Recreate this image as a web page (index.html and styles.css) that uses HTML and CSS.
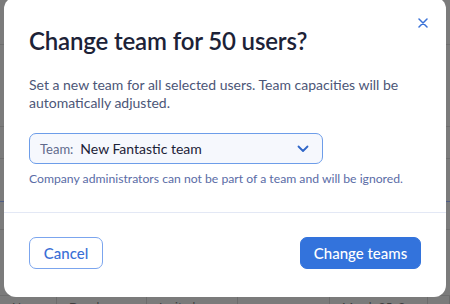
FILE: index.html
```html
<!DOCTYPE html>
<html lang="en">
<head>
<meta charset="utf-8">
<title>Change team</title>
<link rel="stylesheet" href="styles.css">
</head>
<body>
<div class="page">
  <div class="bg">
    <div class="bg-row h1"></div>
    <div class="bg-row h2"></div>
    <div class="bg-row h3"></div>
    <div class="bg-row h4 link-row"></div>
    <div class="bg-row h5"></div>
    <div class="bg-row h6"></div>
    <div class="bg-row h7 cols">
      <span>Name</span><span>Develop</span><span>Invited</span><span></span><span>March 25, 2</span><span></span>
    </div>
  </div>

  <div class="modal" role="dialog" aria-labelledby="dlg-title">
    <button class="close" aria-label="Close">
      <svg viewBox="0 0 10 10" width="10" height="10"><path d="M1 1L9 9M9 1L1 9" stroke="currentColor" stroke-width="1.5" stroke-linecap="round"/></svg>
    </button>
    <div class="body">
      <h1 id="dlg-title" class="title">Change team for 50 users?</h1>
      <p class="desc">Set a new team for all selected users. Team capacities will be automatically adjusted.</p>
      <div class="select">
        <span class="label">Team:</span>
        <span class="value">New Fantastic team</span>
        <svg class="chev" viewBox="0 0 12 8" width="12" height="8"><path d="M1.5 1.5L6 6L10.5 1.5" fill="none" stroke="currentColor" stroke-width="1.8" stroke-linecap="round" stroke-linejoin="round"/></svg>
      </div>
      <p class="hint">Company administrators can not be part of a team and will be ignored.</p>
    </div>
    <div class="footer">
      <button class="btn secondary">Cancel</button>
      <button class="btn primary">Change teams</button>
    </div>
  </div>
</div>
</body>
</html>
```

FILE: styles.css
```css
* { box-sizing: border-box; }
html, body { margin: 0; padding: 0; }
body {
  width: 450px;
  height: 304px;
  overflow: hidden;
  background: #7b7b7b;
  font-family: Lato, "Noto Sans", sans-serif;
}
.page {
  position: relative;
  width: 450px;
  height: 304px;
  overflow: hidden;
}
.bg {
  display: flex;
  flex-direction: column;
  color: #3e3e3e;
  font-size: 13px;
}
.bg-row {
  border-bottom: 1px solid #6e6e6e;
}
.link-row { border-bottom-color: #4e5c86; }
.h1 { height: 45px; }
.h2 { height: 82px; }
.h3 { height: 32px; }
.h4 { height: 43px; }
.h5 { height: 28px; }
.h6 { height: 66px; }
.h7 {
  height: 8px;
  border-bottom: 0;
  display: grid;
  grid-template-columns: 57px 90px 91px 92px 98px 1fr;
  font-size: 12px;
  line-height: 14px;
}
.cols span {
  border-right: 1px solid #6c6c6c;
  padding: 4px 0 0 12px;
  overflow: hidden;
  white-space: nowrap;
}

.modal {
  position: absolute;
  left: 4px;
  top: -3px;
  width: 442px;
  height: 300px;
  background: #fff;
  border-radius: 12px;
  display: flex;
  flex-direction: column;
}
.close {
  position: absolute;
  top: 21px;
  right: 18px;
  width: 10px;
  height: 10px;
  padding: 0;
  border: 0;
  background: none;
  color: #3a72d8;
  display: flex;
}
.body {
  padding: 28px 25px 0 25px;
  border-bottom: 1px solid #e3e8f5;
  height: 216px;
}
.title {
  margin: 0;
  font-size: 24px;
  line-height: 32px;
  font-weight: 600;
  color: #1c2237;
  letter-spacing: -0.15px;
}
.desc {
  margin: 19px 0 0 0;
  font-size: 14px;
  line-height: 18px;
  color: #4c5677;
  width: 370px;
}
.select {
  margin-top: 21px;
  width: 294px;
  height: 31px;
  border: 1px solid #6d9de9;
  border-radius: 7px;
  background: #f6f8fd;
  display: flex;
  align-items: center;
  padding: 0 10px;
}
.label {
  font-size: 13px;
  color: #606a8c;
  margin-right: 7px;
}
.value {
  font-size: 14px;
  color: #1c2237;
  flex: 1;
}
.chev { color: #2f66c8; margin-right: 3px; }
.hint {
  margin: 7px 0 0 0;
  font-size: 12.2px;
  line-height: 16px;
  color: #5a6ca6;
  white-space: nowrap;
}
.footer {
  display: flex;
  justify-content: space-between;
  padding: 24px 25px 0 25px;
}
.btn {
  height: 32px;
  border-radius: 7px;
  font-family: inherit;
  font-size: 15px;
  font-weight: 500;
  padding: 0;
  cursor: pointer;
}
.secondary {
  width: 74px;
  background: #fff;
  border: 1px solid #7ba5ee;
  color: #3a6fd6;
}
.primary {
  width: 121px;
  background: #3373dc;
  border: 1px solid #3373dc;
  color: #fff;
}
```
